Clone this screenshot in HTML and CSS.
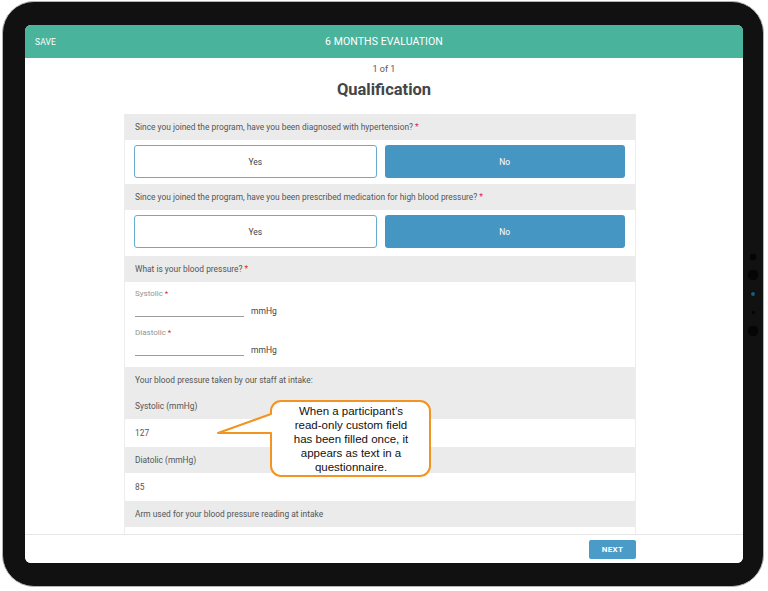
FILE: index.html
```html
<!DOCTYPE html>
<html>
<head>
<meta charset="utf-8">
<link rel="stylesheet" href="styles.css">
</head>
<body>
<div class="device">
  <span class="dot d1"></span>
  <span class="dot d2"></span>
  <span class="dot d3"></span>
  <span class="dot d4"></span>
  <span class="dot d5"></span>
  <div class="screen">
    <header class="topbar">
      <span class="save">SAVE</span>
      <span class="title">6 MONTHS EVALUATION</span>
      <span></span>
    </header>
    <main class="content">
      <div class="pager">1 of 1</div>
      <h1 class="heading">Qualification</h1>
      <section class="card">
        <div class="q">Since you joined the program, have you been diagnosed with hypertension?&nbsp;<span class="star">*</span></div>
        <div class="choices">
          <div class="btn btn-out">Yes</div>
          <div class="btn btn-on">No</div>
        </div>
        <div class="q">Since you joined the program, have you been prescribed medication for high blood pressure?&nbsp;<span class="star">*</span></div>
        <div class="choices choices-last">
          <div class="btn btn-out">Yes</div>
          <div class="btn btn-on">No</div>
        </div>
        <div class="q">What is your blood pressure?&nbsp;<span class="star">*</span></div>
        <div class="fields">
          <div class="flabel">Systolic <span class="star">*</span></div>
          <div class="frow"><span class="line"></span><span class="unit">mmHg</span></div>
          <div class="flabel flabel-2">Diastolic <span class="star">*</span></div>
          <div class="frow"><span class="line"></span><span class="unit">mmHg</span></div>
        </div>
        <div class="info">Your blood pressure taken by our staff at intake:</div>
        <div class="info info-b">Systolic (mmHg)</div>
        <div class="val">127</div>
        <div class="info">Diatolic (mmHg)</div>
        <div class="val">85</div>
        <div class="info">Arm used for your blood pressure reading at intake</div>
        <div class="val"></div>
      </section>
    </main>
    <footer class="footbar">
      <div class="next">NEXT</div>
    </footer>
    <div class="callout">
      <svg class="bubble" width="220" height="84" viewBox="0 0 220 84">
        <path d="M66,3 H205 A10,10 0 0 1 215,13 V68 A10,10 0 0 1 205,78 H66 A10,10 0 0 1 56,68 V35 L3,35 L56,16 V13 A10,10 0 0 1 66,3 Z" fill="#ffffff" stroke="#f39321" stroke-width="2" stroke-linejoin="round"/>
      </svg>
      <div class="ctext">When a participant’s<br>read-only custom field<br>has been filled once, it<br>appears as text in a<br>questionnaire.</div>
    </div>
  </div>
</div>
</body>
</html>
```

FILE: styles.css
```css
* { box-sizing: border-box; }
html, body { margin: 0; padding: 0; background: #ffffff; }
body {
  font-family: Roboto, "Liberation Sans", Arial, sans-serif;
  width: 768px;
  height: 591px;
  overflow: hidden;
}
.device {
  position: relative;
  width: 762px;
  height: 586px;
  margin: 1px 0 0 2px;
  background: #111111;
  border: 1px solid #b4b4b4;
  border-radius: 32px;
  padding: 23px 20px 23px 22px;
}
.dot {
  position: absolute;
  border-radius: 50%;
  background: #050505;
  box-shadow: 0 0 1px #000;
}
.d1 { left: 747px; top: 252px; width: 6px; height: 6px; }
.d2 { left: 745px; top: 268px; width: 10px; height: 10px; }
.d3 { left: 748px; top: 290px; width: 4px; height: 4px; background: #1d5a7c; }
.d4 { left: 748.5px; top: 309px; width: 3px; height: 3px; }
.d5 { left: 745px; top: 324px; width: 10px; height: 10px; }

.screen {
  position: relative;
  width: 100%;
  height: 100%;
  background: #ffffff;
  border-radius: 6px;
  overflow: hidden;
  display: flex;
  flex-direction: column;
}
.topbar {
  height: 33px;
  flex: none;
  background: #4ab39c;
  color: #ffffff;
  display: grid;
  grid-template-columns: 1fr auto 1fr;
  align-items: center;
}
.save {
  padding-left: 10px;
  font-size: 8.5px;
  letter-spacing: 0.1px;
}
.title {
  font-size: 10.5px;
  letter-spacing: 0.1px;
}
.content {
  flex: 1;
  overflow: hidden;
  display: flex;
  flex-direction: column;
  align-items: center;
}
.pager {
  margin-top: 5px;
  font-size: 9px;
  line-height: 12px;
  color: #555555;
}
.heading {
  margin: 4px 0 0;
  font-size: 16.5px;
  line-height: 22px;
  font-weight: 700;
  color: #454545;
}
.card {
  width: 512px;
  margin: 13px 8px 0 0;
  border-left: 1px solid #ededed;
  border-right: 1px solid #ededed;
  flex: none;
}
.q, .info {
  background: #ebebeb;
  height: 26px;
  padding: 0 10px;
  display: flex;
  align-items: center;
  font-size: 8.4px;
  color: #555555;
  white-space: nowrap;
}
.star { color: #e5262b; }
.choices {
  display: flex;
  gap: 8px;
  padding: 5px 10px 6px 9px;
}
.choices-last { padding-bottom: 8px; }
.btn {
  flex: 1;
  height: 33px;
  border-radius: 3px;
  display: flex;
  align-items: center;
  justify-content: center;
  font-size: 8.5px;
}
.btn-out {
  border: 1.5px solid #6aa9d0;
  background: #ffffff;
  color: #444444;
}
.btn-on {
  background: #4696c4;
  color: #ffffff;
}
.fields {
  padding: 6px 10px 11px;
}
.flabel {
  font-size: 8px;
  line-height: 12px;
  color: #939393;
}
.flabel-2 { margin-top: 10px; }
.frow {
  display: flex;
  align-items: flex-end;
  gap: 7px;
}
.line {
  display: block;
  width: 109px;
  height: 17px;
  border-bottom: 1px solid #9c9c9c;
}
.unit {
  font-size: 8.5px;
  line-height: 12px;
  color: #444444;
}
.val {
  height: 28px;
  padding: 0 10px;
  display: flex;
  align-items: center;
  font-size: 8.4px;
  color: #555555;
}
.footbar {
  height: 29px;
  flex: none;
  border-top: 1px solid #e6e6e6;
  background: #ffffff;
  display: flex;
  justify-content: flex-end;
  align-items: center;
  padding-right: 107px;
}
.next {
  width: 47px;
  height: 19px;
  background: #4b9bc8;
  border-radius: 2px;
  color: #ffffff;
  font-size: 8px;
  font-weight: 700;
  letter-spacing: 0.3px;
  display: flex;
  align-items: center;
  justify-content: center;
}
.callout {
  position: absolute;
  left: 190px;
  top: 373px;
  width: 220px;
  height: 84px;
}
.bubble { display: block; }
.ctext {
  position: absolute;
  left: 56px;
  top: 6px;
  width: 160px;
  text-align: center;
  font-family: "Liberation Sans", Arial, sans-serif;
  font-size: 11.5px;
  line-height: 14px;
  color: #111111;
}
```
